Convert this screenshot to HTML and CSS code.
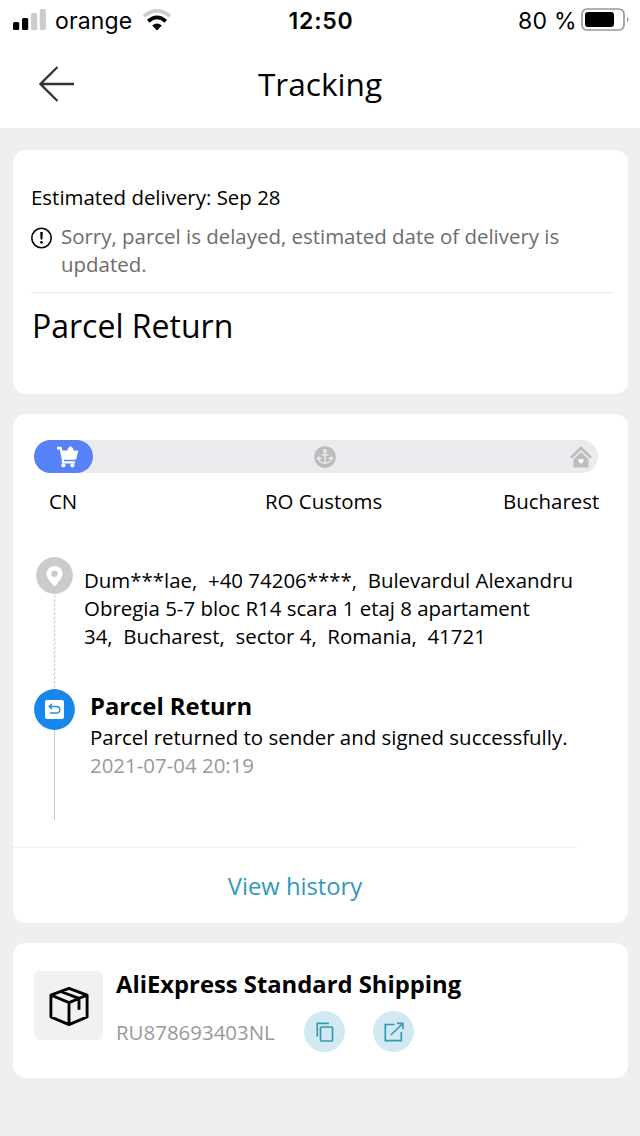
FILE: index.html
```html
<!DOCTYPE html>
<html lang="en">
<head>
<meta charset="utf-8">
<title>Tracking</title>
<link rel="stylesheet" href="styles.css">
</head>
<body>
<header class="top">
  <div class="status">
    <div class="carrier">
      <svg class="signal" width="34" height="22" viewBox="0 0 34 22"><rect x="0" y="13" width="6.2" height="8" rx="1.5"/><rect x="9" y="9" width="6.2" height="12" rx="1.5"/><rect class="off" x="18" y="4" width="6.2" height="17" rx="1.5"/><rect class="off" x="26.7" y="0" width="6.2" height="21" rx="1.5"/></svg>
      <span class="carrier-name">orange</span>
      <svg class="wifi" width="30" height="23" viewBox="0 0 30 23"><path d="M2 7.2Q15-3.500 28 7.2" fill="none" stroke="#ccc" stroke-width="3.6"/><path d="M6.2 12.2Q15 4.600 23.8 12.2" fill="none" stroke="#000" stroke-width="3.8"/><path d="M10.2 16.6Q15 12.600 19.8 16.6L15 21.500Z"/></svg>
    </div>
    <span class="clock">12:50</span>
    <div class="power">
      <span class="percent">80 %</span>
      <svg width="49" height="24" viewBox="0 0 49 24"><rect x="1" y="1" width="42" height="21" rx="5" fill="none" stroke="#999" stroke-width="1.7"/><rect x="4" y="4" width="29" height="15" rx="3"/><path d="M46 8.5q3 3 0 6z" fill="#999"/></svg>
    </div>
  </div>
  <div class="nav">
    <svg class="back" width="36" height="36" viewBox="0 0 36 36"><path d="M18.500 1L1.500 18 18.500 35M1.500 18H35" fill="none" stroke="#333" stroke-width="2.3"/></svg>
    <h1 class="title">Tracking</h1>
  </div>
</header>
<main class="cards">
  <section class="card estimate">
    <p class="eta">Estimated delivery: Sep 28</p>
    <div class="delay">
      <svg class="alert" width="22" height="22" viewBox="0 0 22 22"><circle cx="10.500" cy="11" r="9.700" fill="none" stroke="#000" stroke-width="1.600"/><path d="M9.200 5h2.600l-.4 7.400h-1.800z"/><circle cx="10.500" cy="15.300" r="1.400"/></svg>
      <p class="delay-text">Sorry, parcel is delayed, estimated date of delivery is<br>updated.</p>
    </div>
    <h2 class="state">Parcel Return</h2>
  </section>
  <section class="card route">
    <div class="bar">
      <div class="bar-fill">
        <svg width="22" height="22" viewBox="0 0 22 22" fill="#fff"><path d="M0 .7H4.400L5.400 4.500H10.500L10.800 2.600 13.500 0 16.200 2.600 16.500 4.500H21.300L19.300 12.800Q19.100 13.800 18.200 13.800H6.900L7.200 15.300H18V17.600H5.600Q4.500 17.500 4.700 16.500L5 14.800 2.800 3.400H0Z"/><circle cx="6.400" cy="19.300" r="2.100"/><circle cx="15.400" cy="19.300" r="2.100"/></svg>
      </div>
      <svg class="anchor" width="22" height="22" viewBox="0 0 22 22"><circle cx="11" cy="11" r="10.800" fill="#bcbcbc"/><g fill="none" stroke="#f1f1f1" stroke-width="1.300"><circle cx="11" cy="5" r="1.300"/><path d="M11 6.500V18M7.500 8.800h7M4.600 11.500q.2 5.300 6.400 5.800 6.200-.5 6.400-5.800M3 13.500l1.700-2.300 2.600 1.600M19 13.500l-1.700-2.300-2.600 1.600"/></g></svg>
      <svg class="house" width="22" height="22" viewBox="0 0 22 22"><path d="M1 11.700L11 2l10 9.700" fill="none" stroke="#bdbdbd" stroke-width="2.800"/><path d="M11 6.200l7.500 7V21.600h-15V13.200z" fill="#bdbdbd"/><path d="M11 18q-3.200-2.200-2.800-4.200.9-1.900 2.800-.2 1.900-1.700 2.800.2.400 2-2.800 4.200z" fill="#f8f8fa"/></svg>
    </div>
    <div class="stops"><span>CN</span><span class="customs">RO Customs</span><span class="city">Bucharest</span></div>
    <div class="timeline">
      <div class="rail">
        <svg width="37" height="37" viewBox="0 0 37 37"><circle cx="18.500" cy="18.500" r="18.400" fill="#cbcbcb"/><path d="M18.500 29.500Q10.500 21.500 10.500 17a8 8 0 0 1 16 0q0 4.500-8 12.500z" fill="#fff"/><circle cx="18.500" cy="16.800" r="3.200" fill="#cbcbcb"/></svg>
        <svg width="3" height="95" viewBox="0 0 3 95"><path d="M2.300 1L.900 4M2.300 5.300L.900 8.300M2.300 9.600L.900 12.600M2.300 13.900L.900 16.900M2.300 18.200L.900 21.200M2.300 22.500L.900 25.500M2.300 26.800L.900 29.800M2.300 31.100L.900 34.100M2.300 35.400L.900 38.400M2.300 39.700L.900 42.700M2.300 44L.900 47M2.300 48.300L.900 51.300M2.300 52.600L.900 55.600M2.300 56.900L.900 59.900M2.300 61.200L.900 64.200M2.300 65.500L.900 68.500M2.300 69.800L.900 72.800M2.300 74.100L.900 77.100M2.300 78.400L.900 81.400M2.300 82.700L.900 85.700M2.300 87L.900 90M2.300 91.300L.900 94.300" stroke="#c8c8c8" stroke-width="1"/></svg>
      </div>
      <p class="address">Dum***lae,&nbsp; +40 74206****,&nbsp; Bulevardul Alexandru<br>Obregia 5-7 bloc R14 scara 1 etaj 8 apartament<br>34,&nbsp; Bucharest,&nbsp; sector 4,&nbsp; Romania,&nbsp; 41721</p>
      <div class="rail">
        <svg width="41" height="41" viewBox="0 0 41 41"><circle cx="20.500" cy="20.500" r="20.400" fill="#1787eb"/><rect x="11" y="11" width="19" height="19" rx="2" fill="#fff"/><path d="M18 14.800L15.300 17.400 18 20M15.500 17.400H22.500a3.300 3.300 0 0 1 0 6.600H16" fill="none" stroke="#2c8de0" stroke-width="1.500"/></svg>
        <div class="line"></div>
      </div>
      <div class="event">
        <h3 class="event-title">Parcel Return</h3>
        <p class="event-text">Parcel returned to sender and signed successfully.</p>
        <p class="event-date">2021-07-04 20:19</p>
      </div>
    </div>
    <div class="history">View history</div>
  </section>
  <section class="card shipping">
    <div class="thumb">
      <svg width="40" height="40" viewBox="0 0 42 42" fill="none" stroke="#000" stroke-width="3" stroke-linejoin="round"><path d="M21 2.500L40 9.500V32.500L21 40.500 2 32.500V9.500ZM2 9.500L21 17.500 40 9.500M21 17.500V40.500M13 6L31.500 13V25"/></svg>
    </div>
    <div class="carrier-info">
      <h3 class="service">AliExpress Standard Shipping</h3>
      <div class="code-row">
        <span class="code">RU878693403NL</span>
        <span class="round"><svg width="20" height="20" viewBox="0 0 20 20" fill="none" stroke="#3698b6" stroke-width="1.700"><path d="M13.800 1.300H2.300V14.500"/><rect x="5.500" y="5" width="12" height="14" rx="1"/></svg></span>
        <span class="round"><svg width="20" height="20" viewBox="0 0 20 20" fill="none" stroke="#3698b6" stroke-width="1.700"><path d="M10.500 2.500H1.300V18.700H17.300V10M6.800 13L18.800 1.500M13 1.400H18.900V7"/></svg></span>
      </div>
    </div>
  </section>
</main>
</body>
</html>
```
FILE: styles.css
```css
* { box-sizing: border-box; }
body, h1, h2, h3, p { margin: 0; font-weight: 400; }
body { width: 640px; height: 1136px; background: #efefef; color: #000; font: 20.45px/28px "Open Sans", "Noto Sans", sans-serif; white-space: nowrap; overflow: hidden; }
svg { display: block; flex: none; }
.top { height: 128px; background: #fff; }
.status { display: grid; grid-template-columns: 1fr auto 1fr; height: 42px; padding: 0 10px 0 13px; font-family: Inter, sans-serif; font-size: 23px; }
.carrier, .power { display: flex; align-items: flex-start; padding-top: 8px; }
.carrier-name { margin: -1px 0 0 8px; letter-spacing: .15px; }
.signal { margin-top: 1px; }
.off { fill: #ccc; }
.wifi { margin: 1px 0 0 10px; }
.clock { margin-left: -1px; padding-top: 7px; font-weight: 600; letter-spacing: .8px; }
.power { justify-content: flex-end; }
.percent { margin: -1px 4px 0 0; letter-spacing: .3px; }
.nav { display: grid; grid-template-columns: 39px 1fr 39px; height: 86px; padding-top: 20px; }
.back { margin: 4px 0 0 39px; }
.title { font-size: 31.6px; line-height: 44px; text-align: center; }
.cards { display: flex; flex-direction: column; gap: 20px; padding: 22px 12px 0 13px; }
.card { background: #fff; border-radius: 13px; }
.estimate { height: 244px; padding: 33px 14px 0 18px; }
.delay { display: flex; gap: 8px; height: 71px; margin-top: 11px; border-bottom: 1px solid #ececec; color: #6c6c6c; }
.alert { margin-top: 5px; }
.state { margin: 11px 0 0 1px; font-size: 32px; line-height: 44px; }
.route { height: 509px; padding-top: 26px; }
.bar { display: flex; align-items: center; width: 564px; height: 33px; margin-left: 21px; padding-right: 6px; border-radius: 17px; background: #e9ebef; }
.bar-fill { display: flex; align-items: center; width: 59px; height: 33px; padding-left: 23px; border-radius: 17px; background: #5681f7; }
.anchor { margin-left: 220.5px; }
.house { margin-left: auto; }
.stops { display: grid; grid-template-columns: 216px 238px 1fr; margin: 14px 0 0 36px; }
.timeline { display: grid; grid-template-columns: 41px 1fr; grid-template-rows: 132px 131px; margin: 42px 0 0 21px; }
.rail { display: flex; flex-direction: column; align-items: center; }
.line { width: 1px; height: 90px; background: #ccc; }
.address { padding: 9px 0 0 9px; }
.event { padding-left: 15px; }
.event-title, .service { font-size: 23.8px; line-height: 34px; font-weight: 700; }
.event-date, .code { color: #999; }
.history { width: 564px; margin-top: 27px; padding-top: 21px; border-top: 1px solid #eee; color: #3398b9; font-size: 23.8px; line-height: 34px; text-align: center; }
.shipping { display: flex; gap: 13px; height: 135px; padding: 28px 0 0 21px; }
.thumb { display: grid; place-items: center; width: 69px; height: 69px; border-radius: 6px; background: #f1f1f1; }
.carrier-info { margin-top: -4px; }
.code-row { display: flex; align-items: center; height: 41px; margin-top: 10px; }
.code { width: 188px; }
.round { display: grid; place-items: center; width: 41px; height: 41px; margin-right: 28px; border-radius: 50%; background: #d3e9f2; }
```
